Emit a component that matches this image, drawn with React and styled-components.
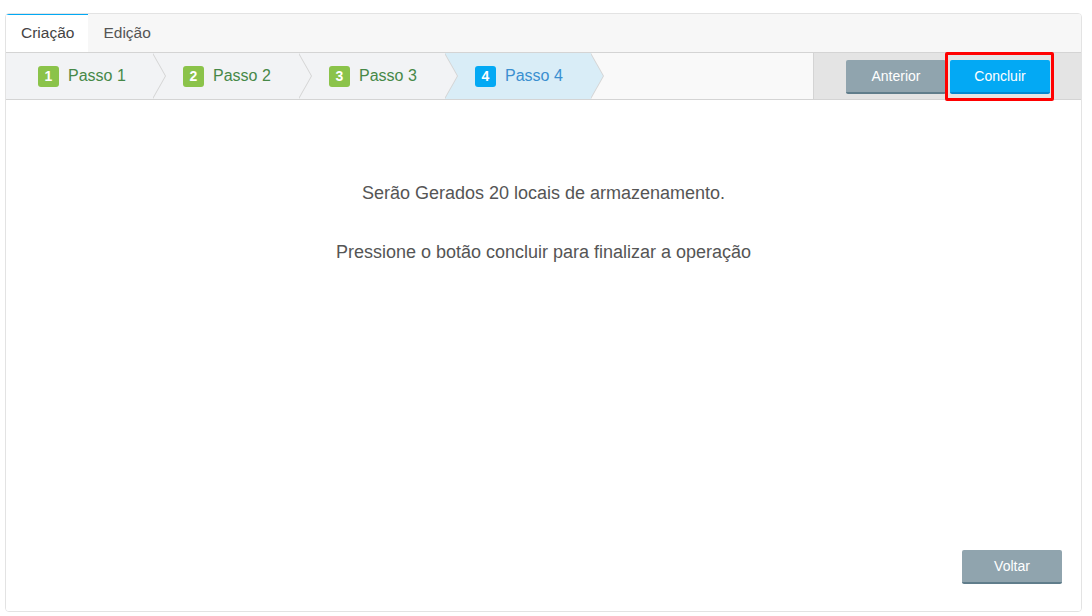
import React from "react";
import styled, { createGlobalStyle } from "styled-components";

const Global = createGlobalStyle`
  html, body { margin: 0; padding: 0; background: #fff; }
  body { font-family: "Liberation Sans", Arial, sans-serif; }
  * { box-sizing: border-box; }
`;

const Page = styled.div`
  padding: 13px 10px 4px 5px;
  width: 1092px;
  height: 616px;
`;

const Panel = styled.div`
  width: 1077px;
  height: 599px;
  border: 1px solid #e3e3e3;
  border-radius: 4px;
  display: flex;
  flex-direction: column;
  overflow: hidden;
`;

const TabBar = styled.div`
  height: 38px;
  background: #f7f7f7;
  display: flex;
  align-items: stretch;
`;

const Tab = styled.div`
  padding: 0 14px 0 15px;
  font-size: 15.5px;
  color: ${(p) => (p.$active ? "#444" : "#555")};
  background: ${(p) => (p.$active ? "#fff" : "transparent")};
  border-top: 2px solid ${(p) => (p.$active ? "#03a9f4" : "transparent")};
  margin-top: -1px;
  display: flex;
  align-items: center;
  padding-bottom: 1px;
`;

const Wizard = styled.div`
  height: 48px;
  border-top: 1px solid #d4d4d4;
  border-bottom: 1px solid #d4d4d4;
  background: #f9f9f9;
  display: flex;
`;

const Steps = styled.div`
  display: flex;
  flex: 1;
`;

const Step = styled.div`
  position: relative;
  width: ${(p) => (p.$first ? 147 : 146)}px;
  padding-left: ${(p) => (p.$first ? 32 : 30)}px;
  background: ${(p) => (p.$active ? "#d9edf7" : "#f2f3f5")};
  display: flex;
  align-items: center;
  gap: 9px;
  font-size: 16px;
  color: ${(p) => (p.$active ? "#3a8fd0" : "#468847")};
  z-index: ${(p) => 10 - p.$idx};

  &::before {
    content: "";
    position: absolute;
    top: 0;
    right: -13px;
    border-top: 23px solid transparent;
    border-bottom: 23px solid transparent;
    border-left: 13px solid #d4d4d4;
  }
  &::after {
    content: "";
    position: absolute;
    top: 0;
    right: -12px;
    border-top: 23px solid transparent;
    border-bottom: 23px solid transparent;
    border-left: 13px solid ${(p) => (p.$active ? "#d9edf7" : "#f2f3f5")};
  }
`;

const Badge = styled.span`
  width: 21px;
  height: 21px;
  border-radius: 3px;
  background: ${(p) => (p.$active ? "#03a9f4" : "#8bc34a")};
  color: #fff;
  font-size: 14px;
  font-weight: bold;
  display: inline-flex;
  align-items: center;
  justify-content: center;
`;

const Actions = styled.div`
  width: 268px;
  border-left: 1px solid #d4d4d4;
  background: #e4e4e4;
  display: flex;
  align-items: flex-start;
  padding: 7px 0 0 32px;
  gap: 4px;
`;

const Button = styled.button`
  width: 100px;
  height: 34px;
  border: none;
  border-bottom: 2px solid ${(p) => (p.$primary ? "#0288d1" : "#607d8b")};
  border-radius: 2px;
  background: ${(p) => (p.$primary ? "#03a9f4" : "#90a4ae")};
  color: #fff;
  font-family: "Liberation Sans", Arial, sans-serif;
  font-size: 14px;
  padding: 0;
  cursor: pointer;
`;

const Highlight = styled.span`
  position: relative;
  display: inline-flex;
  &::after {
    content: "";
    position: absolute;
    left: -5px;
    right: -4px;
    top: -8px;
    bottom: -7px;
    border: 3px solid #ff0000;
    border-radius: 2px;
    pointer-events: none;
  }
`;

const Content = styled.div`
  flex: 1;
  background: #fff;
  display: flex;
  flex-direction: column;
  padding: 83px 19px 27px 0;
`;

const Message = styled.p`
  margin: 0 0 ${(p) => p.$gap || 0}px;
  text-align: center;
  font-size: 18px;
  line-height: 21px;
  color: #555;
  padding-left: 19px;
`;

const Footer = styled.div`
  margin-top: auto;
  display: flex;
  justify-content: flex-end;
`;

export default function App() {
  const steps = ["Passo 1", "Passo 2", "Passo 3", "Passo 4"];
  return (
    <Page>
      <Global />
      <Panel>
        <TabBar>
          <Tab $active>Criação</Tab>
          <Tab>Edição</Tab>
        </TabBar>
        <Wizard>
          <Steps>
            {steps.map((s, i) => (
              <Step key={s} $idx={i} $first={i === 0} $active={i === 3}>
                <Badge $active={i === 3}>{i + 1}</Badge>
                {s}
              </Step>
            ))}
          </Steps>
          <Actions>
            <Button>Anterior</Button>
            <Highlight>
              <Button $primary>Concluir</Button>
            </Highlight>
          </Actions>
        </Wizard>
        <Content>
          <Message $gap={38}>Serão Gerados 20 locais de armazenamento.</Message>
          <Message>Pressione o botão concluir para finalizar a operação</Message>
          <Footer>
            <Button>Voltar</Button>
          </Footer>
        </Content>
      </Panel>
    </Page>
  );
}
